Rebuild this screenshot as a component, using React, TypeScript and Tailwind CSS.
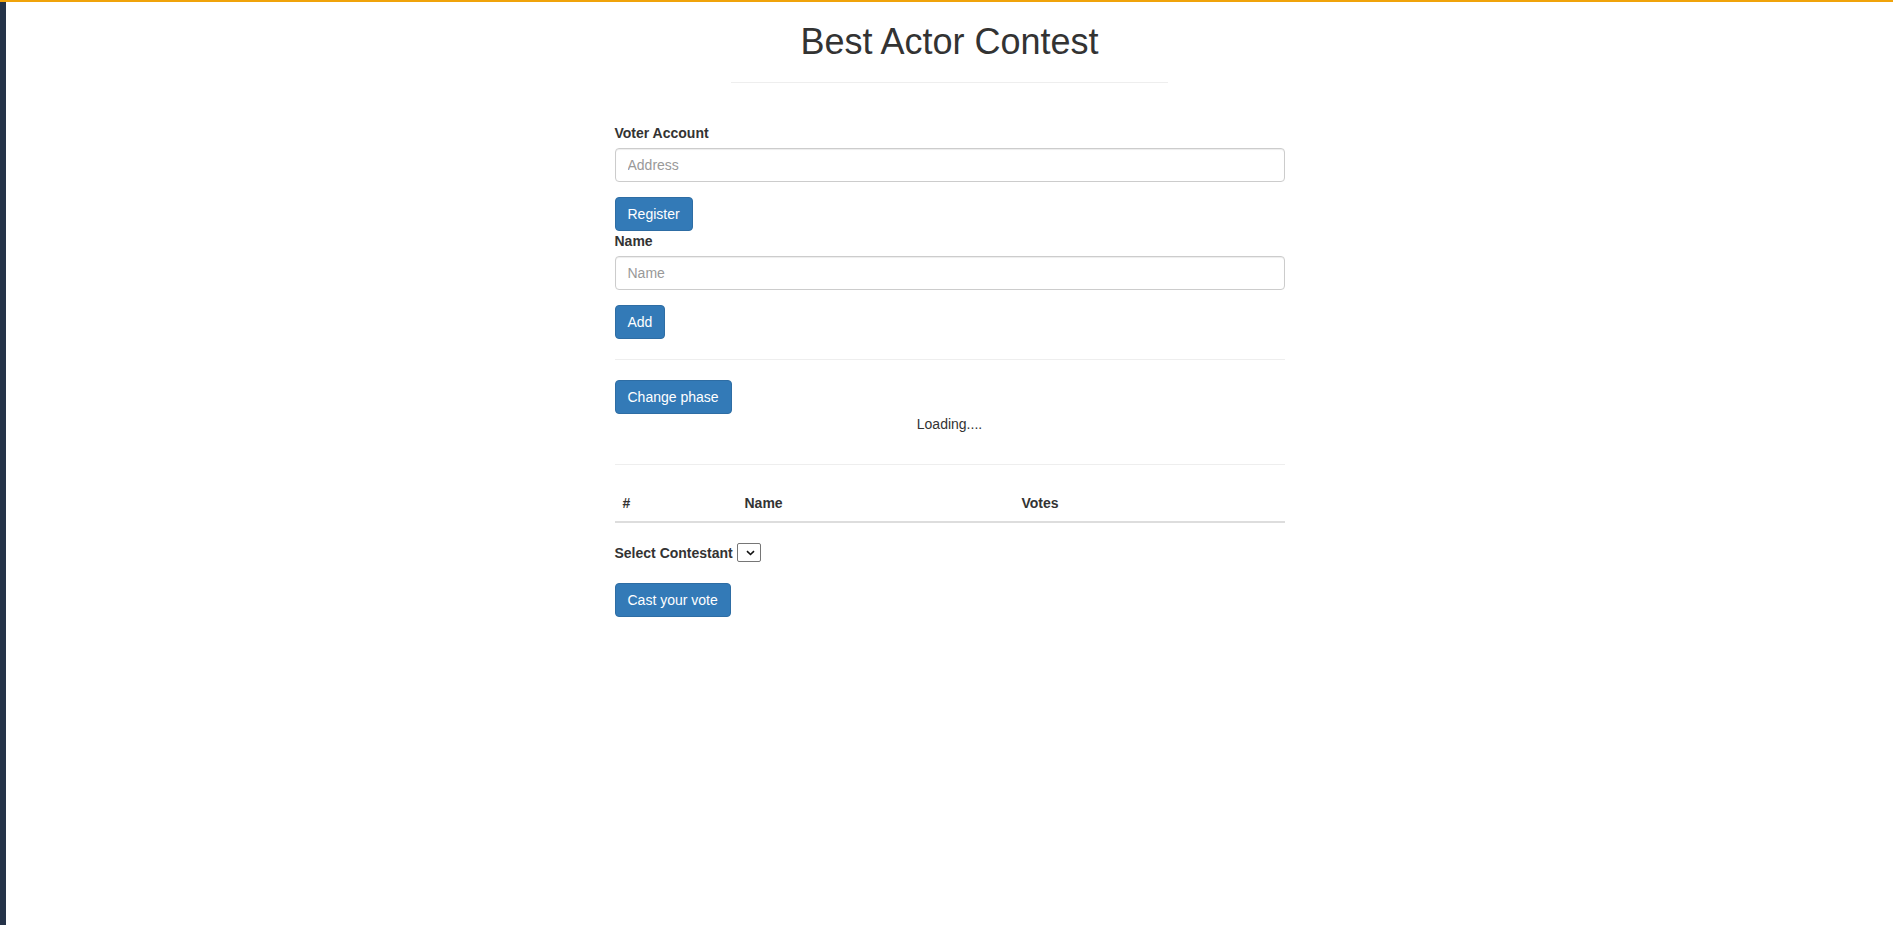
import React from "react";

const btn =
  "inline-block h-[34px] px-[12px] py-[6px] bg-[#337ab7] border border-[#2e6da4] rounded-[4px] text-white text-[14px] leading-[20px] whitespace-nowrap";
const input =
  "block w-full h-[34px] px-[12px] py-[6px] border border-[#ccc] rounded-[4px] bg-white text-[14px] leading-[20px] text-[#555] shadow-[inset_0_1px_1px_rgba(0,0,0,0.075)] placeholder:text-[#999] outline-none";

export default function App() {
  return (
    <div className="min-h-screen flex flex-col bg-white font-['Liberation_Sans',Arial,sans-serif] text-[14px] leading-[20px] text-[#333]">
      <div className="h-[2px] bg-[#f0a30a]" />
      <div className="flex flex-1">
        <div className="w-[6px] bg-[#253349]" />
        <main className="flex-1 flex flex-col items-center">
          <h1 className="mt-[20px] text-[36px] leading-[39.6px] font-medium text-[#333]">
            Best Actor Contest
          </h1>
          <hr className="w-[437px] mt-[20px] border-0 border-t border-[#eee]" />
          <div className="w-[670px] mt-[40px]">
            <label className="block font-bold mb-[5px]">Voter Account</label>
            <input className={input} placeholder="Address" />
            <div className="mt-[15px]">
              <button className={btn}>Register</button>
            </div>
            <label className="block font-bold mb-[5px]">Name</label>
            <input className={input} placeholder="Name" />
            <div className="mt-[15px]">
              <button className={btn}>Add</button>
            </div>
            <hr className="mt-[20px] border-0 border-t border-[#eee]" />
            <div className="mt-[20px]">
              <button className={btn}>Change phase</button>
            </div>
            <div className="text-center h-[20px]">Loading....</div>
            <hr className="mt-[30px] border-0 border-t border-[#eee]" />
            <table className="w-full mt-[20px] border-collapse">
              <thead>
                <tr>
                  <th className="w-[122px] text-left font-bold p-[8px] border-b-2 border-[#ddd]">#</th>
                  <th className="w-[277px] text-left font-bold p-[8px] border-b-2 border-[#ddd]">Name</th>
                  <th className="text-left font-bold p-[8px] border-b-2 border-[#ddd]">Votes</th>
                </tr>
              </thead>
              <tbody />
            </table>
            <div className="mt-[20px] flex items-center h-[20px]">
              <label className="font-bold">Select Contestant</label>
              <span className="ml-[4px] w-[24px] h-[19px] border border-[#767676] rounded-[2px] bg-white flex items-center justify-end pr-[5px]">
                <svg width="9" height="6" viewBox="0 0 9 6" fill="none">
                  <path d="M1 1.2 L4.5 4.5 L8 1.2" stroke="#111" strokeWidth="1.6" />
                </svg>
              </span>
            </div>
            <div className="mt-[20px]">
              <button className={btn}>Cast your vote</button>
            </div>
          </div>
        </main>
      </div>
    </div>
  );
}
